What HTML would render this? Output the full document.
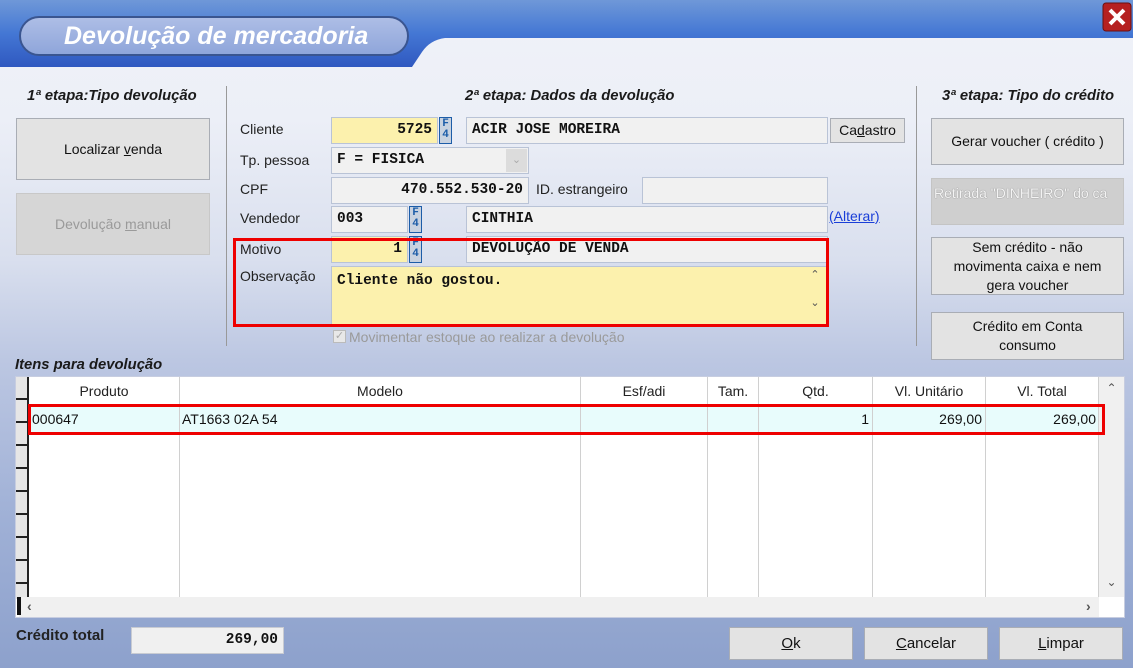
<!DOCTYPE html>
<html><head><meta charset="utf-8"><style>
*{margin:0;padding:0;box-sizing:border-box}
body{width:1133px;height:668px;overflow:hidden;position:relative;font-family:"Liberation Sans",sans-serif;font-size:14px;color:#111;
background:linear-gradient(180deg,#f0f2f8 0px,#eceff7 120px,#d9dfee 260px,#bcc7e2 360px,#9fb0d6 520px,#8da1cc 668px)}
.a{position:absolute}
.lbl{position:absolute;font-size:14px;color:#222}
.fld{position:absolute;border:1px solid #b9c3d6;background:#f1f1f1;font-family:"Liberation Mono",monospace;font-weight:bold;font-size:14.5px;padding:3px 5px;line-height:18px;white-space:nowrap;overflow:hidden}
.y{background:#fcf1ad}
.r{text-align:right}
.btn{position:absolute;border:1px solid #a9adb5;background:#e3e3e3;text-align:center;font-size:14px;color:#111;display:flex;align-items:center;justify-content:center;line-height:19px}
.f4{position:absolute;width:13px;height:27px;background:#c8d2e0;border:1px solid #1d5da8;font-family:"Liberation Mono",monospace;font-weight:bold;font-size:11px;color:#1d5da8;line-height:11px;text-align:center;padding-top:1px}
.h{font-weight:bold;font-style:italic;font-size:14.8px;color:#1a1a1a}
.col{position:absolute;top:0;bottom:0;border-left:1px solid #d0d0d0}
.th{position:absolute;top:6px;font-size:14px;text-align:center;color:#222}
.td{position:absolute;top:34px;font-size:14px;color:#111}
</style></head><body>
<svg class="a" style="left:0;top:0" width="1133" height="70">
<defs><linearGradient id="tb" x1="0" y1="0" x2="0" y2="1"><stop offset="0" stop-color="#6f98d8"/><stop offset="0.5" stop-color="#4477d4"/><stop offset="1" stop-color="#2f58c0"/></linearGradient>
<linearGradient id="pl" x1="0" y1="0" x2="0" y2="1"><stop offset="0" stop-color="#aebee6"/><stop offset="1" stop-color="#8ea5da"/></linearGradient></defs>
<path d="M0 0H1133V38H445Q430 40 422 52L412 67H0Z" fill="url(#tb)"/>
<rect x="20" y="17" width="388" height="38" rx="19" fill="url(#pl)" stroke="#3a5590" stroke-width="2"/>
<text x="64" y="44" fill="#fff" font-family="Liberation Sans" font-weight="bold" font-style="italic" font-size="25">Devolução de mercadoria</text>
<rect x="1103" y="3" width="28" height="28" rx="3" fill="#b52020" stroke="#6a1010"/>
<path d="M1110 10L1124 24M1124 10L1110 24" stroke="#fff" stroke-width="4"/>
</svg>
<div class="a h" style="left:27px;top:88px">1ª etapa:Tipo devolução</div>
<div class="a h" style="left:465px;top:88px">2ª etapa: Dados da devolução</div>
<div class="a h" style="left:942px;top:88px">3ª etapa: Tipo do crédito</div>
<div class="a" style="left:226px;top:86px;width:1px;height:260px;background:#999"></div>
<div class="a" style="left:916px;top:86px;width:1px;height:260px;background:#999"></div>
<div class="btn" style="left:16px;top:118px;width:194px;height:62px"><span>Localizar <u>v</u>enda</span></div>
<div class="btn" style="left:16px;top:193px;width:194px;height:62px;background:#d6d6d6;color:#9a9a9a;border-color:#c8c8c8"><span>Devolução <u>m</u>anual</span></div>
<div class="lbl" style="left:240px;top:121px">Cliente</div>
<div class="lbl" style="left:240px;top:152px">Tp. pessoa</div>
<div class="lbl" style="left:240px;top:181px">CPF</div>
<div class="lbl" style="left:240px;top:210px">Vendedor</div>
<div class="lbl" style="left:240px;top:241px">Motivo</div>
<div class="lbl" style="left:240px;top:268px">Observação</div>
<div class="fld y r" style="left:331px;top:117px;width:107px;height:27px">5725</div>
<div class="f4" style="left:439px;top:117px">F<br>4</div>
<div class="fld" style="left:466px;top:117px;width:362px;height:27px">ACIR JOSE MOREIRA</div>
<div class="btn" style="left:830px;top:118px;width:75px;height:25px"><span>Ca<u>d</u>astro</span></div>
<div class="fld" style="left:331px;top:147px;width:198px;height:27px">F = FISICA</div>
<div class="a" style="left:506px;top:149px;width:21px;height:23px;background:#dcdcdc;color:#aaa;font-size:11px;text-align:center;line-height:23px">&#8964;</div>
<div class="fld r" style="left:331px;top:177px;width:198px;height:27px">470.552.530-20</div>
<div class="lbl" style="left:536px;top:181px">ID. estrangeiro</div>
<div class="fld" style="left:642px;top:177px;width:186px;height:27px"></div>
<div class="fld" style="left:331px;top:206px;width:77px;height:27px">003</div>
<div class="f4" style="left:409px;top:206px">F<br>4</div>
<div class="fld" style="left:466px;top:206px;width:362px;height:27px">CINTHIA</div>
<div class="a" style="left:829px;top:208px;color:#1a3ed8;text-decoration:underline;font-size:14px">(Alterar)</div>
<div class="fld y r" style="left:331px;top:236px;width:77px;height:27px">1</div>
<div class="f4" style="left:409px;top:236px">F<br>4</div>
<div class="fld" style="left:466px;top:236px;width:362px;height:27px">DEVOLUÇÃO DE VENDA</div>
<div class="fld y" style="left:331px;top:266px;width:497px;height:60px;padding-top:5px">Cliente não gostou.</div>
<div class="a" style="left:805px;top:268px;width:20px;height:56px;color:#555;font-size:11px;text-align:center;line-height:14px">&#8963;<br><br>&#8964;</div>
<div class="a" style="left:233px;top:238px;width:596px;height:89px;border:3px solid #ee0000"></div>
<div class="a" style="left:333px;top:330px;width:13px;height:13px;border:1px solid #bbb;background:#e8e8e8;color:#aaa;font-size:11px;line-height:11px;text-align:center">✓</div>
<div class="a" style="left:349px;top:329px;color:#9a9a9a;font-size:14px">Movimentar estoque ao realizar a devolução</div>
<div class="btn" style="left:931px;top:118px;width:193px;height:47px">Gerar voucher ( crédito )</div>
<div class="btn" style="left:931px;top:178px;width:193px;height:47px;background:#cfcfcf;color:#f4f4f4;border-color:#c4c4c4;align-items:flex-start;padding-top:5px;justify-content:flex-start;padding-left:2px;overflow:hidden;white-space:nowrap;text-shadow:0 0 1px #666">Retirada "DINHEIRO" do ca</div>
<div class="btn" style="left:931px;top:237px;width:193px;height:58px">Sem crédito - não<br>movimenta caixa e nem<br>gera voucher</div>
<div class="btn" style="left:931px;top:312px;width:193px;height:48px">Crédito em Conta<br>consumo</div>
<div class="a h" style="left:15px;top:357px">Itens para devolução</div>
<div class="a" style="left:15px;top:376px;width:1110px;height:242px;background:#fff;border:1px solid #c7cde0">
 <div class="a" style="left:0;top:0;width:13px;height:222px;background:repeating-linear-gradient(180deg,#e6e6e6 0,#e6e6e6 21px,#222 21px,#222 23px);border-right:2px solid #222"></div>
 <div class="a" style="left:13px;top:29px;width:1070px;height:27px;background:#e8fcfc"></div>
 <div class="col" style="left:163px;bottom:20px"></div><div class="col" style="left:564px;bottom:20px"></div><div class="col" style="left:691px;bottom:20px"></div><div class="col" style="left:742px;bottom:20px"></div><div class="col" style="left:856px;bottom:20px"></div><div class="col" style="left:969px;bottom:20px"></div><div class="col" style="left:1082px;bottom:20px"></div>
 <div class="th" style="left:13px;width:150px">Produto</div>
 <div class="th" style="left:164px;width:400px">Modelo</div>
 <div class="th" style="left:565px;width:126px">Esf/adi</div>
 <div class="th" style="left:692px;width:50px">Tam.</div>
 <div class="th" style="left:743px;width:113px">Qtd.</div>
 <div class="th" style="left:857px;width:112px">Vl. Unitário</div>
 <div class="th" style="left:970px;width:112px">Vl. Total</div>
 <div class="td" style="left:16px">000647</div>
 <div class="td" style="left:166px">AT1663 02A 54</div>
 <div class="td" style="left:743px;width:110px;text-align:right">1</div>
 <div class="td" style="left:857px;width:109px;text-align:right">269,00</div>
 <div class="td" style="left:970px;width:110px;text-align:right">269,00</div>
 <div class="a" style="left:1083px;top:0;width:25px;height:220px;background:#f0f0f0;color:#555;font-size:12px;text-align:center"><div style="margin-top:4px">&#8963;</div><div style="margin-top:180px">&#8964;</div></div>
 <div class="a" style="left:3px;top:220px;width:1080px;height:20px;background:#f0f0f0;color:#555;font-size:14px;font-weight:bold"><span style="position:absolute;left:-2px;top:0;width:4px;height:18px;background:#111"></span><span style="position:absolute;left:8px;top:1px">‹</span><span style="position:absolute;left:1067px;top:1px">›</span></div>
 <div class="a" style="left:12px;top:27px;width:1077px;height:31px;border:3px solid #ee0000"></div>
</div>
<div class="a" style="left:16px;top:627px;font-weight:bold;font-size:15px;color:#222">Crédito total</div>
<div class="fld r" style="left:131px;top:627px;width:153px;height:27px;background:#f0f0f0;border-color:#c8cbd2">269,00</div>
<div class="btn" style="left:729px;top:627px;width:124px;height:33px;font-size:15px"><span><u>O</u>k</span></div>
<div class="btn" style="left:864px;top:627px;width:124px;height:33px;font-size:15px"><span><u>C</u>ancelar</span></div>
<div class="btn" style="left:999px;top:627px;width:124px;height:33px;font-size:15px"><span><u>L</u>impar</span></div>
</body></html>
